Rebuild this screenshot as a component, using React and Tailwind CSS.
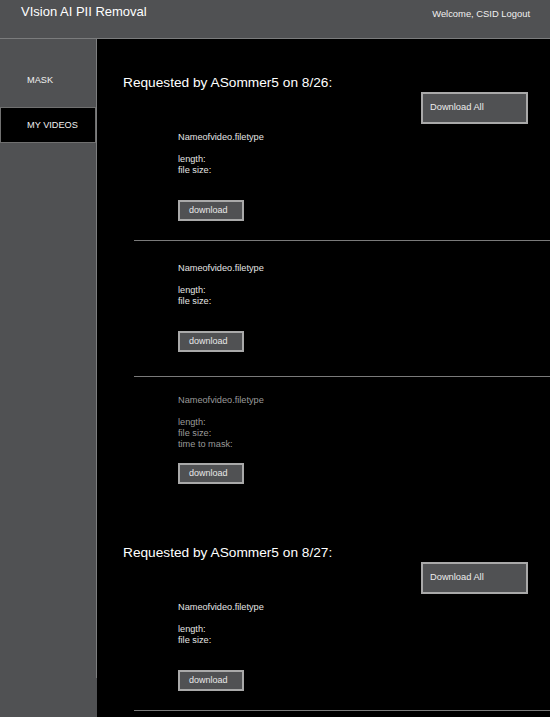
import React from "react";

const font = { fontFamily: '"Liberation Sans", Arial, Helvetica, sans-serif' };

function VideoItem({ pt, pb, border = true, dim = false, extra = false }) {
  const txt = dim ? "text-[#9a9a9a]" : "text-[#e4e4e4]";
  return (
    <div
      className={`${pt} ${pb} pl-[44px] ${border ? "border-b border-[#7a7a7a]" : ""}`}
    >
      <div className={`h-[68px] text-[9.2px] leading-[11px] ${txt}`}>
        <div>Nameofvideo.filetype</div>
        <div className="mt-[11px]">length:</div>
        <div>file size:</div>
        {extra && <div>time to mask:</div>}
      </div>
      <button className="flex h-[21px] w-[66px] items-center border-2 border-[#a9a9a9] bg-[#505153] pl-[9px] text-[9px] text-[#e8e8e8]">
        download
      </button>
    </div>
  );
}

function Section({ date, children }) {
  return (
    <div className="pt-[35px]">
      <h2 className="pl-[26px] text-[13.7px] leading-[18px] text-white">
        Requested by ASommer5 on {date}:
      </h2>
      <div className="flex justify-end pr-[22px]">
        <button className="flex h-[32px] w-[107px] items-center border-2 border-[#a9a9a9] bg-[#505153] pl-[7px] text-[9.3px] text-[#ececec]">
          Download All
        </button>
      </div>
      <div className="ml-[37px]">{children}</div>
    </div>
  );
}

export default function App() {
  return (
    <div className="flex min-h-screen flex-col bg-[#505153]" style={font}>
      <header className="flex h-[39px] shrink-0 items-start justify-between border-b border-[#7b7c7d] bg-[#505153] pl-[21px] pr-[20px]">
        <div className="pt-[4px] text-[13px] leading-[16px] text-white">VIsion AI PII Removal</div>
        <div className="pt-[8px] text-[9.4px] leading-[11px] text-[#f0f0f0]">Welcome, CSID Logout</div>
      </header>
      <div className="flex flex-1">
        <aside className="w-[97px] shrink-0 bg-[#505153]">
          <nav className="h-[639px] border-r border-[#7d7e7f]">
            <div className="flex h-[68px] items-center pl-[27px] pt-[16px] text-[9.2px] text-[#f0f0f0]">
              MASK
            </div>
            <div className="flex h-[36px] items-center border border-[#707070] bg-black pl-[26px] pt-[2px] text-[9.2px] text-[#f0f0f0]">
              MY VIDEOS
            </div>
          </nav>
        </aside>
        <main className="flex-1 bg-black">
          <Section date="8/26">
            <VideoItem pt="pt-[8px]" pb="pb-[19px]" />
            <VideoItem pt="pt-[22px]" pb="pb-[24px]" />
            <VideoItem pt="pt-[18px]" pb="pb-[25px]" border={false} dim extra />
          </Section>
          <Section date="8/27">
            <VideoItem pt="pt-[8px]" pb="pb-[19px]" />
          </Section>
        </main>
      </div>
    </div>
  );
}
